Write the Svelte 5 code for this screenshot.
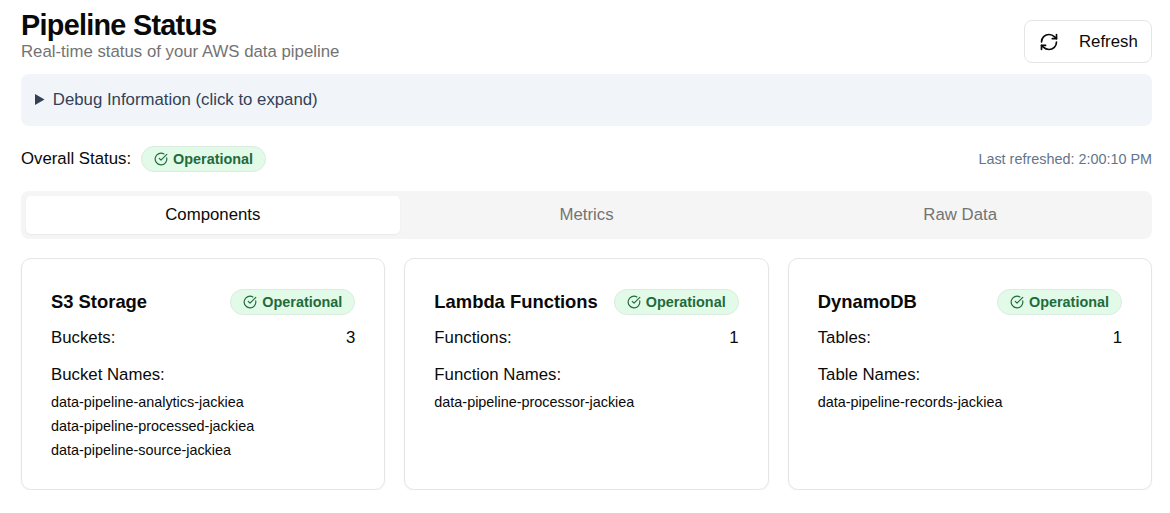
<script lang="ts">
  const tabs = ['Components', 'Metrics', 'Raw Data'];
  let activeTab = $state('Components');

  const cards = [
    { title: 'S3 Storage', countLabel: 'Buckets:', namesLabel: 'Bucket Names:', names: ['data-pipeline-analytics-jackiea', 'data-pipeline-processed-jackiea', 'data-pipeline-source-jackiea'] },
    { title: 'Lambda Functions', countLabel: 'Functions:', namesLabel: 'Function Names:', names: ['data-pipeline-processor-jackiea'] },
    { title: 'DynamoDB', countLabel: 'Tables:', namesLabel: 'Table Names:', names: ['data-pipeline-records-jackiea'] }
  ];
</script>

{#snippet badge()}
  <span class="badge">
    <svg width="14" height="14" viewBox="0 0 24 24" fill="none" stroke="currentColor" stroke-width="2" stroke-linecap="round" stroke-linejoin="round">
      <path d="M21.8 10A10 10 0 1 1 17 3.34"/>
      <path d="m9 11 3 3L22 4"/>
    </svg>
    Operational
  </span>
{/snippet}

<div class="page">
  <header class="header">
    <div>
      <h1>Pipeline Status</h1>
      <p class="subtitle">Real-time status of your AWS data pipeline</p>
    </div>
    <button class="refresh">
      <svg width="20" height="20" viewBox="0 0 24 24" fill="none" stroke="currentColor" stroke-width="2" stroke-linecap="round" stroke-linejoin="round">
        <path d="M3 12a9 9 0 0 1 9-9 9.75 9.75 0 0 1 6.74 2.74L21 8"/>
        <path d="M21 3v5h-5"/>
        <path d="M21 12a9 9 0 0 1-9 9 9.75 9.75 0 0 1-6.74-2.74L3 16"/>
        <path d="M8 16H3v5"/>
      </svg>
      Refresh
    </button>
  </header>

  <details class="debug">
    <summary>Debug Information (click to expand)</summary>
  </details>

  <div class="status-row">
    <div class="overall">
      <span>Overall Status:</span>
      {@render badge()}
    </div>
    <span class="last">Last refreshed: 2:00:10 PM</span>
  </div>

  <div class="tabs">
    {#each tabs as tab}
      <button class="tab" class:active={activeTab === tab} onclick={() => (activeTab = tab)}>{tab}</button>
    {/each}
  </div>

  <div class="cards">
    {#each cards as card}
      <section class="card">
        <div class="card-head">
          <h3>{card.title}</h3>
          {@render badge()}
        </div>
        <div class="count">
          <span>{card.countLabel}</span>
          <span>{card.names.length}</span>
        </div>
        <div class="names-label">{card.namesLabel}</div>
        {#each card.names as name}
          <div class="name">{name}</div>
        {/each}
      </section>
    {/each}
  </div>
</div>

<style>
  :global(body) {
    margin: 0;
    background: #fff;
    font-family: "Liberation Sans", Arial, sans-serif;
    color: #0a0a0a;
  }

  .page {
    padding: 9px 18px 0 21px;
  }

  .header {
    display: flex;
    justify-content: space-between;
    height: 54px;
  }

  h1 {
    margin: 0;
    font-size: 28.8px;
    line-height: 32px;
    font-weight: 700;
    letter-spacing: -0.025em;
  }

  .subtitle {
    margin: 0;
    font-size: 16.8px;
    line-height: 22px;
    color: #737373;
  }

  .refresh {
    display: flex;
    align-items: center;
    align-self: flex-end;
    gap: 20px;
    height: 43px;
    width: 128px;
    padding: 0 0 0 14px;
    border: 1px solid #e5e5e5;
    border-radius: 8px;
    background: #fff;
    color: #0a0a0a;
    font: inherit;
    font-size: 16.8px;
    box-sizing: border-box;
  }

  .debug {
    margin-top: 11px;
    height: 52px;
    box-sizing: border-box;
    padding: 16px 14px;
    border-radius: 8px;
    background: #f1f5f9;
    color: #334155;
    font-size: 16.8px;
    line-height: 19px;
  }

  .status-row {
    display: flex;
    justify-content: space-between;
    align-items: center;
    margin-top: 20px;
    height: 26px;
  }

  .overall {
    display: flex;
    align-items: center;
    gap: 10px;
    font-size: 16.8px;
  }

  .last {
    font-size: 14.4px;
    color: #64748b;
  }

  .badge {
    display: inline-flex;
    align-items: center;
    gap: 5px;
    height: 26px;
    box-sizing: border-box;
    padding: 0 12px;
    border: 1px solid #dcebdf;
    border-radius: 13px;
    background: #e2fbe8;
    color: #1f6b3c;
    font-size: 14.4px;
    font-weight: 700;
  }

  .tabs {
    display: grid;
    grid-template-columns: repeat(3, 1fr);
    margin-top: 19px;
    height: 48px;
    box-sizing: border-box;
    padding: 5px;
    border-radius: 8px;
    background: #f5f5f5;
  }

  .tab {
    border: 0;
    border-radius: 5px;
    background: transparent;
    color: #737373;
    font: inherit;
    font-size: 16.8px;
  }

  .tab.active {
    background: #fff;
    color: #0a0a0a;
    box-shadow: 0 1px 2px rgba(0, 0, 0, 0.05);
  }

  .cards {
    display: grid;
    grid-template-columns: repeat(3, 1fr);
    gap: 19px;
    margin-top: 19px;
  }

  .card {
    height: 232px;
    box-sizing: border-box;
    padding: 30px 29px;
    border: 1px solid #e5e5e5;
    border-radius: 10px;
    box-shadow: 0 1px 2px rgba(0, 0, 0, 0.05);
  }

  .card-head {
    display: flex;
    justify-content: space-between;
    align-items: center;
    height: 26px;
  }

  h3 {
    margin: 0;
    font-size: 18.4px;
    font-weight: 700;
  }

  .count {
    display: flex;
    justify-content: space-between;
    margin-top: 14px;
    font-size: 16.8px;
    line-height: 18px;
  }

  .names-label {
    margin-top: 19px;
    margin-bottom: 6px;
    font-size: 16.8px;
    line-height: 18px;
  }

  .name {
    font-size: 14.4px;
    line-height: 24px;
  }
</style>
